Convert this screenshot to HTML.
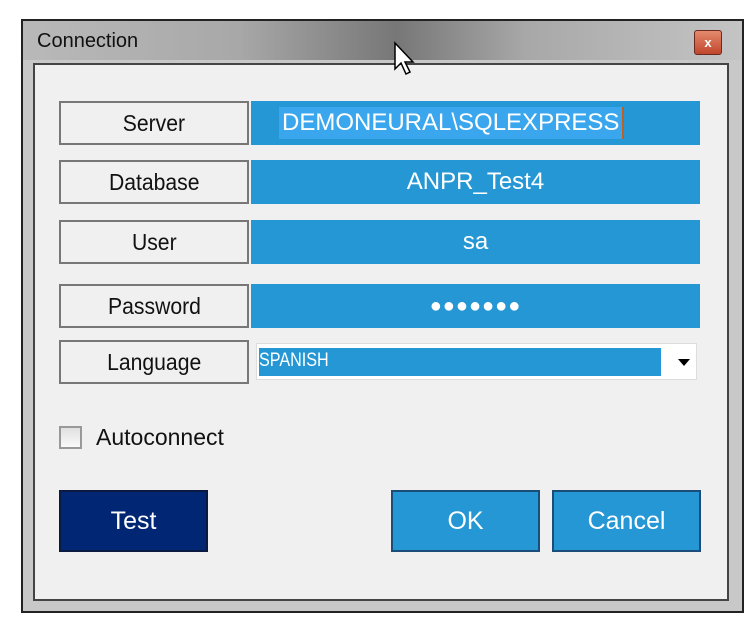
<!DOCTYPE html>
<html><head><style>
body{margin:0;width:744px;height:624px;background:#fff;position:relative;overflow:hidden;font-family:"Liberation Sans",sans-serif}
.a{position:absolute;box-sizing:border-box}
.lbl{border:2px solid #777;background:#f0f0f0;color:#111;font-size:23px;display:flex;align-items:center;justify-content:center}
.lbl span{display:inline-block;transform:scaleX(.92)}
.fld{background:#2597d5;color:#fff;font-size:24px;display:flex;align-items:center;justify-content:center}
.btn{border:2px solid #1a4d7a;color:#fff;font-size:25px;display:flex;align-items:center;justify-content:center;background:#2597d5}
</style></head><body>
<div class="a" style="left:21px;top:19px;width:723px;height:594px;border:2px solid #222;background:linear-gradient(90deg,#b9b9b9 0%,#a8a8a8 30%,#777 52%,#a8a8a8 70%,#c4c4c4 100%)"></div>
<div class="a" style="left:23px;top:60px;width:719px;height:551px;background:#c8c8c8"></div>
<div class="a" style="left:37px;top:30px;font-size:20px;color:#111">Connection</div>
<div class="a" style="left:694px;top:30px;width:28px;height:25px;border:1px solid #6a2a20;border-radius:3px;background:linear-gradient(#e58a6e,#c0462c);color:#fff;font-size:13px;font-weight:bold;text-align:center;line-height:23px">x</div>
<div class="a" style="left:33px;top:63px;width:696px;height:538px;border:2px solid #444;background:#f0f0f0"></div>
<svg class="a" style="left:393px;top:41px" width="24" height="36" viewBox="0 0 24 36"><path d="M2 2 L2 28 L8 22 L13 33 L17 31 L12 21 L20 21 Z" fill="#fff" stroke="#000" stroke-width="1.5"/></svg>

<div class="a lbl" style="left:59px;top:101px;width:190px;height:44px"><span>Server</span></div>
<div class="a fld" style="left:251px;top:101px;width:449px;height:44px;justify-content:flex-start;padding-left:28px"><span style="background:#3aa6ee;padding:2px 3px;border-right:2px solid #c06020">DEMONEURAL\SQLEXPRESS</span></div>
<div class="a lbl" style="left:59px;top:160px;width:190px;height:44px"><span>Database</span></div>
<div class="a fld" style="left:251px;top:160px;width:449px;height:44px">ANPR_Test4</div>
<div class="a lbl" style="left:59px;top:220px;width:190px;height:44px"><span>User</span></div>
<div class="a fld" style="left:251px;top:220px;width:449px;height:44px">sa</div>
<div class="a lbl" style="left:59px;top:284px;width:190px;height:44px"><span>Password</span></div>
<div class="a fld" style="left:251px;top:284px;width:449px;height:44px;font-size:20px;letter-spacing:1px">●●●●●●●</div>
<div class="a lbl" style="left:59px;top:340px;width:190px;height:44px"><span>Language</span></div>
<div class="a" style="left:256px;top:343px;width:441px;height:37px;background:#fff;border:1px solid #ddd"></div>
<div class="a" style="left:259px;top:348px;width:402px;height:28px;background:#2597d5;color:#fff;font-size:19px;line-height:26px"><span style="display:inline-block;transform:scaleX(.85);transform-origin:left">SPANISH</span></div>
<div class="a" style="left:678px;top:359px;width:0;height:0;border-left:6px solid transparent;border-right:6px solid transparent;border-top:7px solid #000"></div>

<div class="a" style="left:59px;top:426px;width:23px;height:23px;border:2px solid #999;background:linear-gradient(#e0e0e0,#fafafa)"></div>
<div class="a" style="left:96px;top:424px;font-size:23px;color:#111">Autoconnect</div>

<div class="a btn" style="left:59px;top:490px;width:149px;height:62px;background:#012774;border-color:#0a1a40">Test</div>
<div class="a btn" style="left:391px;top:490px;width:149px;height:62px">OK</div>
<div class="a btn" style="left:552px;top:490px;width:149px;height:62px">Cancel</div>
</body></html>
